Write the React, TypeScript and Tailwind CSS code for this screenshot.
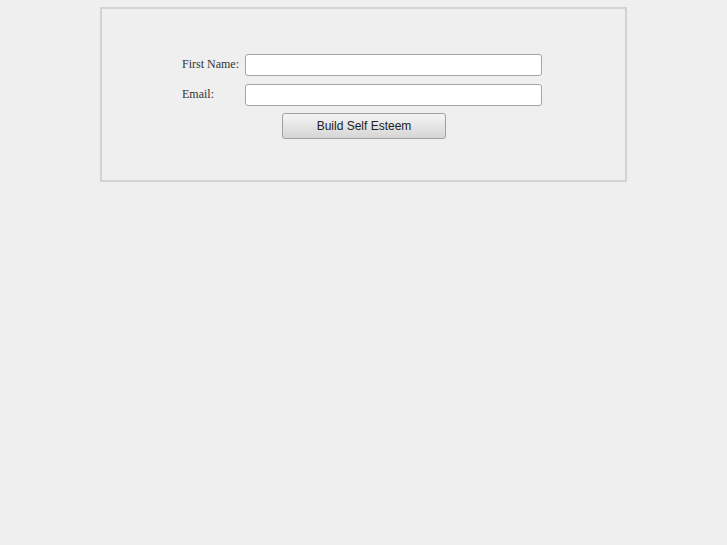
import { useState } from 'react';

export default function App() {
  const [firstName, setFirstName] = useState('');
  const [email, setEmail] = useState('');

  return (
    <div className="min-h-[545px] bg-[#efefef] pt-[7px]">
      <div className="mx-auto box-border h-[175px] w-[527px] border-2 border-[#d2d2d2] pt-[45px] pr-[3px]">
        <form
          className="flex flex-col items-center"
          onSubmit={(e) => e.preventDefault()}
        >
          <div className="flex items-center">
            <label className="w-[63px] pb-[2px] font-['Liberation_Serif',serif] text-[12px] text-[#333]">
              First Name:
            </label>
            <input
              type="text"
              value={firstName}
              onChange={(e) => setFirstName(e.target.value)}
              className="box-border h-[22px] w-[297px] rounded-[3px] border border-[#a6a6a6] bg-white px-1 text-[12px] outline-none"
            />
          </div>
          <div className="mt-[8px] flex items-center">
            <label className="w-[63px] pb-[2px] font-['Liberation_Serif',serif] text-[12px] text-[#333]">
              Email:
            </label>
            <input
              type="text"
              value={email}
              onChange={(e) => setEmail(e.target.value)}
              className="box-border h-[22px] w-[297px] rounded-[3px] border border-[#a6a6a6] bg-white px-1 text-[12px] outline-none"
            />
          </div>
          <button
            type="submit"
            className="mt-[7px] ml-[4px] box-border h-[26px] w-[164px] rounded-[3px] border border-[#a0a0a0] bg-gradient-to-b from-[#f4f4f4] to-[#d6d6d6] pb-[1px] font-['Liberation_Sans',sans-serif] text-[12px] text-[#222]"
          >
            Build Self Esteem
          </button>
        </form>
      </div>
    </div>
  );
}
